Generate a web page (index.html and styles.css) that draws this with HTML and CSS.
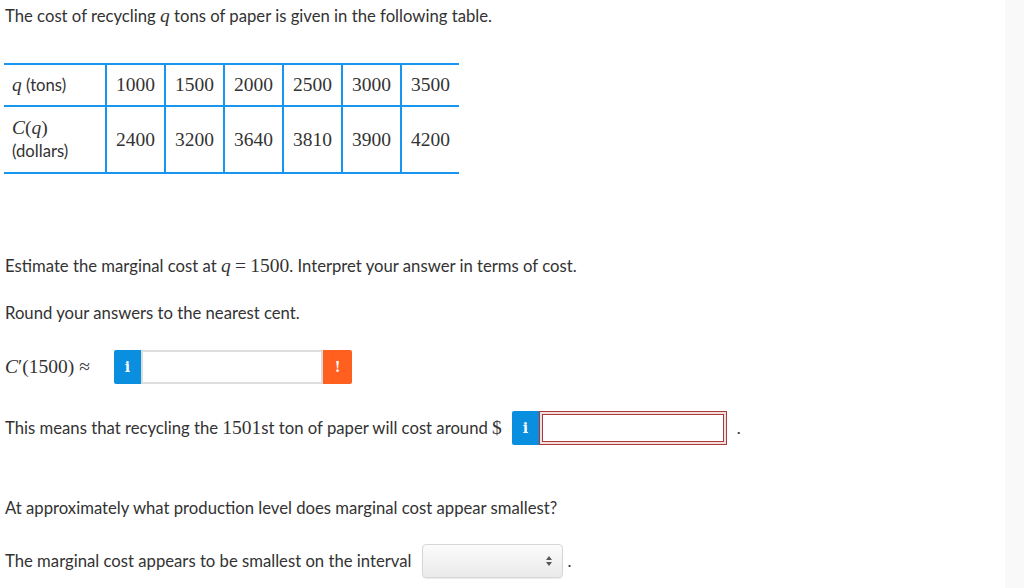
FILE: index.html
```html
<!DOCTYPE html>
<html>
<head>
<meta charset="utf-8">
<link rel="stylesheet" href="styles.css">
</head>
<body>
<div class="page">
  <main class="content">
    <p class="line intro">The cost of recycling <span class="m mi">q</span> tons of paper is given in the following table.</p>

    <table class="data">
      <tr class="r1">
        <th class="lab"><span class="m mi">q</span> (tons)</th>
        <td>1000</td><td>1500</td><td>2000</td><td>2500</td><td>3000</td><td>3500</td>
      </tr>
      <tr class="r2">
        <th class="lab"><span class="m"><span class="mi">C</span>(<span class="mi">q</span>)</span><br>(dollars)</th>
        <td>2400</td><td>3200</td><td>3640</td><td>3810</td><td>3900</td><td>4200</td>
      </tr>
    </table>

    <p class="line est">Estimate the marginal cost at <span class="m mi">q</span> <span class="m">=</span> <span class="m">1500</span>. Interpret your answer in terms of cost.</p>

    <p class="line round">Round your answers to the nearest cent.</p>

    <div class="ans ans1">
      <span class="m expr"><span class="mi">C</span>′(1500) ≈</span>
      <div class="group">
        <span class="addon info">i</span>
        <span class="field"></span>
        <span class="addon warn">!</span>
      </div>
    </div>

    <div class="ans ans2">
      <span class="txt">This means that recycling the <span class="m">1501</span>st ton of paper will cost around <span class="m">$</span></span>
      <div class="group">
        <span class="addon info">i</span>
        <span class="field err"></span>
      </div>
      <span class="dot">.</span>
    </div>

    <p class="line q3">At approximately what production level does marginal cost appear smallest?</p>

    <div class="ans ans3">
      <span class="txt">The marginal cost appears to be smallest on the interval</span>
      <span class="select"><span class="arrows"><span class="up"></span><span class="down"></span></span></span>
      <span class="dot">.</span>
    </div>
  </main>
  <aside class="strip"></aside>
</div>
</body>
</html>
```

FILE: styles.css
```css
html, body {
  margin: 0;
  padding: 0;
  background: #ffffff;
}

body {
  font-family: Lato, "Open Sans", sans-serif;
  font-size: 16.7px;
  color: #333333;
}

.page {
  display: flex;
  height: 588px;
  overflow: hidden;
}

.content {
  flex: 1;
  padding: 6px 0 0 5px;
}

.strip {
  width: 19px;
  background: #f9f9f9;
}

.line {
  margin: 0;
  line-height: 20px;
  white-space: nowrap;
}

.m {
  font-family: "Liberation Serif", "Times New Roman", serif;
  font-size: 19.5px;
  line-height: 20px;
}

.mi {
  font-style: italic;
}

.data {
  margin-top: 37px;
  margin-left: -1px;
  border-collapse: collapse;
  border-top: 2px solid #1795ef;
  border-bottom: 2px solid #1795ef;
  font-size: 16.7px;
  color: #333333;
}

.data th,
.data td {
  padding: 0;
  border-left: 2px solid #1795ef;
  border-right: 2px solid #1795ef;
  border-bottom: 2px solid #1795ef;
}

.data th {
  border-left: none;
  text-align: left;
  font-weight: normal;
  width: 93px;
  padding-left: 8px;
  line-height: 23px;
}

.data td:last-child {
  border-right: none;
}

.data td {
  font-family: "Liberation Serif", "Times New Roman", serif;
  font-size: 19.5px;
  text-align: center;
  width: 57px;
}

.r1 {
  height: 42px;
}

.r2 {
  height: 67px;
}

.est {
  margin-top: 82px;
}

.round {
  margin-top: 27px;
}

.ans {
  display: flex;
  align-items: center;
  height: 34px;
  white-space: nowrap;
}

.ans1 {
  margin-top: 27px;
}

.ans1 .expr {
  width: 109px;
}

.ans2 {
  margin-top: 27px;
}

.ans2 .txt {
  margin-right: 10px;
}

.q3 {
  margin-top: 53px;
}

.ans3 {
  margin-top: 26px;
}

.ans3 .txt {
  margin-right: 10px;
}

.group {
  display: flex;
  height: 34px;
}

.addon {
  display: flex;
  align-items: center;
  justify-content: center;
  width: 27px;
  height: 34px;
  color: #ffffff;
  font-family: "DejaVu Serif", serif;
  font-weight: bold;
  font-size: 14px;
}

.info {
  background: #0a8ee0;
  border-radius: 2px 0 0 2px;
}

.warn {
  width: 29px;
  background: #ff5f1f;
  border-radius: 0 2px 2px 0;
}

.field {
  box-sizing: border-box;
  width: 182px;
  height: 34px;
  border: 2px solid #dddddd;
  background: #ffffff;
}

.field.err {
  width: 188px;
  border: 1px solid #a93a3a;
  box-shadow: inset 0 0 0 2px #f3dede, inset 0 0 0 3px #a93a3a;
}

.dot {
  margin-left: 10px;
}

.select {
  box-sizing: border-box;
  position: relative;
  width: 141px;
  height: 34px;
  border: 1px solid #d6d6d6;
  border-radius: 4px;
  background: linear-gradient(#fbfbfb, #eaeaea);
  box-shadow: 0 1px 1px rgba(0, 0, 0, 0.08);
}

.ans3 .dot {
  margin-left: 5px;
}

.arrows {
  position: absolute;
  right: 10px;
  top: 11px;
  display: flex;
  flex-direction: column;
  gap: 2px;
}

.up,
.down {
  width: 0;
  height: 0;
  border-left: 3px solid transparent;
  border-right: 3px solid transparent;
}

.up {
  border-bottom: 4px solid #555555;
}

.down {
  border-top: 4px solid #555555;
}
```
